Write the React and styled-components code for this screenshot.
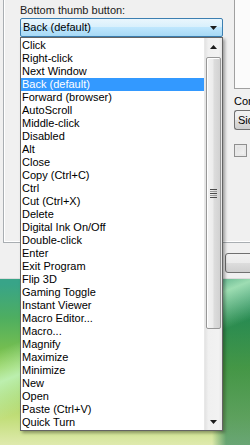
import React from 'react';
import styled, { createGlobalStyle } from 'styled-components';

const Global = createGlobalStyle`
  html, body {
    margin: 0;
    padding: 0;
  }
  body {
    font-family: "Liberation Sans", Arial, sans-serif;
    font-size: 11px;
    color: #000;
  }
`;

const Screen = styled.div`
  position: relative;
  width: 250px;
  height: 445px;
  overflow: hidden;
  background:
    linear-gradient(158deg, transparent 64%, rgba(200, 250, 205, 0.75) 70%, transparent 77%),
    linear-gradient(90deg, transparent 0 212px, rgba(10, 110, 70, 0.55) 226px),
    linear-gradient(180deg, #38a488 0 284px, #4eae60 318px, #8cc846 368px, #c2de7a 418px, #dfeaae 445px);
`;

const Dialog = styled.div`
  height: 279px;
  background: #f0f0f0;
  border-bottom: 1px solid #dcdcdc;
  box-sizing: border-box;
`;

const GroupBox = styled.div`
  margin-left: 3px;
  height: 243px;
  box-sizing: border-box;
  border-left: 1px solid #a9aeb2;
  border-bottom: 1px solid #a9aeb2;
  box-shadow: inset 1px -1px 0 #fff;
  display: grid;
  grid-template-columns: 219px 1fr;
`;

const LeftCol = styled.div`
  padding: 4px 0 0 16px;
  display: flex;
  flex-direction: column;
  gap: 1px;
`;

const Label = styled.div`
  height: 13px;
  line-height: 13px;
  white-space: nowrap;
  color: #1a1a1a;
`;

const Combo = styled.div`
  height: 19px;
  box-sizing: border-box;
  border: 1px solid #3c7fb1;
  border-radius: 2px;
  background: linear-gradient(180deg, #eaf6fd 0%, #d9f0fc 45%, #bee6fd 50%, #a7d9f5 100%);
  display: flex;
  align-items: center;
  justify-content: space-between;
  padding: 0 5px 0 2px;
  line-height: 15px;
`;

const RightCol = styled.div`
  display: flex;
  flex-direction: column;
  padding-left: 11px;
  white-space: nowrap;
`;

const Preview = styled.div`
  height: 90px;
  margin-top: -1px;
  box-sizing: border-box;
  border: 1px solid #a0a0a0;
  border-right: none;
  background: #fbfbfb;
`;

const SmallLabel = styled.div`
  margin-top: 6px;
  line-height: 13px;
`;

const SelectBox = styled.div`
  margin-top: 2px;
  height: 20px;
  box-sizing: border-box;
  border: 1px solid #707070;
  border-right: none;
  border-radius: 3px 0 0 3px;
  background: linear-gradient(180deg, #f2f2f2 0%, #ebebeb 50%, #dddddd 51%, #cfcfcf 100%);
  padding-left: 3px;
  line-height: 18px;
`;

const Check = styled.div`
  margin-top: 14px;
  width: 13px;
  height: 13px;
  box-sizing: border-box;
  border: 1px solid #8f8f8f;
  background: linear-gradient(135deg, #dcdcdc, #f6f6f6);
  box-shadow: inset 0 0 0 2px #e8e8e8;
`;

const ButtonRow = styled.div`
  display: flex;
  padding: 10px 0 0 225px;
`;

const Button = styled.div`
  width: 80px;
  height: 20px;
  flex-shrink: 0;
  box-sizing: border-box;
  border: 1px solid #707070;
  border-radius: 3px;
  background: linear-gradient(180deg, #f2f2f2 0%, #ebebeb 50%, #dddddd 51%, #cfcfcf 100%);
`;

const DropList = styled.div`
  position: absolute;
  left: 20px;
  top: 37px;
  width: 203px;
  height: 394px;
  box-sizing: border-box;
  border: 1px solid #646464;
  background: #fff;
  display: flex;
  box-shadow: 2px 2px 3px rgba(0, 0, 0, 0.35);
`;

const Items = styled.ul`
  list-style: none;
  margin: 0;
  padding: 1px 0 0;
  flex: 1;
`;

const Item = styled.li`
  height: 13px;
  line-height: 13px;
  padding-left: 1px;
  white-space: nowrap;
  background: ${p => (p.$selected ? '#3399ff' : 'transparent')};
  color: ${p => (p.$selected ? '#fff' : '#000')};
`;

const ScrollBar = styled.div`
  width: 17px;
  display: flex;
  flex-direction: column;
  background: linear-gradient(90deg, #e3e3e3 0%, #f0f0f0 20%, #f2f2f2 80%, #e6e6e6 100%);
  border-left: 1px solid #e8e8e8;
`;

const ArrowButton = styled.div`
  height: 17px;
  display: flex;
  align-items: center;
  justify-content: center;
`;

const Track = styled.div`
  flex: 1;
  padding: 2px 1px 0;
`;

const Thumb = styled.div`
  height: 272px;
  box-sizing: border-box;
  border: 1px solid #979797;
  border-radius: 2px;
  background: linear-gradient(90deg, #f4f4f4 0%, #ececec 45%, #dcdcdc 55%, #d2d2d2 100%);
  box-shadow: inset 1px 1px 0 #fff;
  display: flex;
  align-items: center;
  justify-content: center;
`;

const Grip = () => (
  <svg width="8" height="9" viewBox="0 0 8 9">
    {[0, 2, 4, 6, 8].map(y => (
      <rect key={y} x="0" y={y} width="7" height="1" fill={y % 4 === 0 ? '#4b4b4b' : '#9a9a9a'} />
    ))}
  </svg>
);

const Arrow = ({ up }) => (
  <svg width="7" height="4" viewBox="0 0 7 4">
    <path d={up ? 'M3.5 0L7 4H0z' : 'M0 0h7L3.5 4z'} fill="#1c1c1c" />
  </svg>
);

const options = [
  'Click', 'Right-click', 'Next Window', 'Back (default)', 'Forward (browser)', 'AutoScroll',
  'Middle-click', 'Disabled', 'Alt', 'Close', 'Copy (Ctrl+C)', 'Ctrl', 'Cut (Ctrl+X)', 'Delete',
  'Digital Ink On/Off', 'Double-click', 'Enter', 'Exit Program', 'Flip 3D', 'Gaming Toggle',
  'Instant Viewer', 'Macro Editor...', 'Macro...', 'Magnify', 'Maximize', 'Minimize', 'New',
  'Open', 'Paste (Ctrl+V)', 'Quick Turn',
];

export default function App() {
  return (
    <Screen>
      <Global />
      <Dialog>
        <GroupBox>
          <LeftCol>
            <Label>Bottom thumb button:</Label>
            <Combo>
              <span>Back (default)</span>
              <Arrow />
            </Combo>
          </LeftCol>
          <RightCol>
            <Preview />
            <SmallLabel>Conditions</SmallLabel>
            <SelectBox>Side button</SelectBox>
            <Check />
          </RightCol>
        </GroupBox>
        <ButtonRow>
          <Button />
        </ButtonRow>
      </Dialog>
      <DropList>
        <Items>
          {options.map(o => (
            <Item key={o} $selected={o === 'Back (default)'}>{o}</Item>
          ))}
        </Items>
        <ScrollBar>
          <ArrowButton><Arrow up /></ArrowButton>
          <Track>
            <Thumb><Grip /></Thumb>
          </Track>
          <ArrowButton><Arrow /></ArrowButton>
        </ScrollBar>
      </DropList>
    </Screen>
  );
}
